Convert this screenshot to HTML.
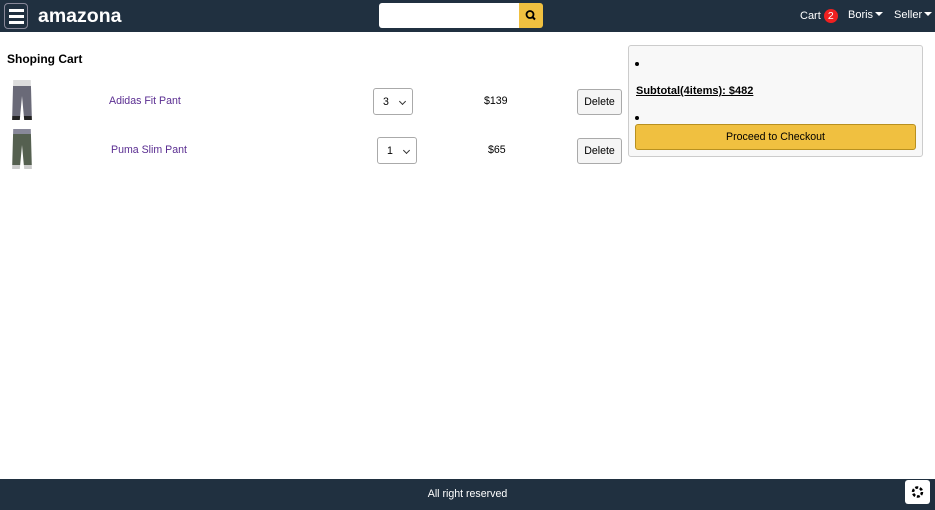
<!DOCTYPE html>
<html><head><style>
*{box-sizing:border-box}
body{margin:0;width:935px;height:510px;position:relative;font-family:"Liberation Sans",Arial,sans-serif;font-size:10.6px;background:#fff;overflow:hidden}
.hdr{position:absolute;left:0;top:0;width:935px;height:32px;background:#203040}
.burger{position:absolute;left:4px;top:3px;width:24px;height:26px;border:1px solid #889;border-radius:4px}
.burger i{position:absolute;left:4px;width:15px;height:2.5px;background:#fff}
.logo{position:absolute;left:38px;top:5px;color:#fff;font-weight:bold;font-size:19.5px}
.search{position:absolute;left:379px;top:3px;width:140px;height:25px;background:#fff;border-radius:3px 0 0 3px}
.sbtn{position:absolute;left:519px;top:3px;width:24px;height:25px;background:#f0c040;border-radius:0 3px 3px 0}
.nav{position:absolute;top:9px;color:#fff;font-size:11px}
.badge{display:inline-block;background:#f02020;border-radius:8px;width:14px;height:14px;text-align:center;font-size:10.5px;line-height:14px}
.tri{display:inline-block;border-left:4px solid transparent;border-right:4px solid transparent;border-top:4px solid #fff;margin-left:2px;vertical-align:2px}
.t{position:absolute}
.sel{position:absolute;width:40px;height:27px;border:1px solid #aaa;border-radius:3px;padding:7px 0 0 9px}
.sel:after{content:"";position:absolute;right:7px;top:10px;width:4px;height:4px;border-right:1.5px solid #333;border-bottom:1.5px solid #333;transform:rotate(45deg)}
.del{position:absolute;width:45px;height:26px;border:1px solid #aaa;border-radius:3px;background:#f5f5f5;text-align:center;line-height:24px}
.pant{position:absolute;width:22px;height:40px}
.box{position:absolute;left:628px;top:45px;width:295px;height:112px;border:1px solid #ccc;border-radius:3px;background:#f8f8f8}
.foot{position:absolute;left:0;top:479px;width:935px;height:31px;background:#203040;color:#fff;text-align:center;line-height:31px}
</style></head><body>
<div class="hdr">
<div class="burger"><i style="top:5px"></i><i style="top:11px"></i><i style="top:17px"></i></div>
<div class="logo">amazona</div>
<div class="search"></div>
<div class="sbtn"><svg width="24" height="25"><circle cx="11" cy="11.5" r="3.5" fill="none" stroke="#000" stroke-width="1.8"/><line x1="13.5" y1="14" x2="16" y2="16.5" stroke="#000" stroke-width="2"/></svg></div>
<div class="nav" style="left:800px">Cart <span class="badge">2</span></div>
<div class="nav" style="left:848px">Boris<span class="tri"></span></div>
<div class="nav" style="left:894px">Seller<span class="tri"></span></div>
</div>
<div class="t" style="left:7px;top:52px;font-weight:bold;font-size:12px">Shoping Cart</div>
<div class="pant" style="left:11px;top:80px;background:linear-gradient(#ddd 0 15%,#6a6a78 15% 90%,#222 90%);clip-path:polygon(10% 0,90% 0,95% 100%,60% 100%,50% 40%,40% 100%,5% 100%)"></div>
<div class="pant" style="left:11px;top:129px;background:linear-gradient(#889 0 12%,#556050 12% 90%,#ccc 90%);clip-path:polygon(10% 0,90% 0,95% 100%,60% 100%,50% 40%,40% 100%,5% 100%)"></div>
<div class="t" style="left:109px;top:95px;color:#5a2d91">Adidas Fit Pant</div>
<div class="t" style="left:111px;top:144px;color:#5a2d91">Puma Slim Pant</div>
<div class="sel" style="left:373px;top:88px">3</div>
<div class="sel" style="left:377px;top:137px">1</div>
<div class="t" style="left:484px;top:95px">$139</div>
<div class="t" style="left:488px;top:144px">$65</div>
<div class="del" style="left:577px;top:89px">Delete</div>
<div class="del" style="left:577px;top:138px">Delete</div>
<div class="box">
<div class="t" style="left:6px;top:16px;width:4px;height:4px;border-radius:50%;background:#000"></div>
<div class="t" style="left:7px;top:39px;font-weight:bold;text-decoration:underline;font-size:11px">Subtotal(4items): $482</div>
<div class="t" style="left:6px;top:70px;width:4px;height:4px;border-radius:50%;background:#000"></div>
<div class="t" style="left:6px;top:78px;width:281px;height:26px;background:#f0c040;border:1px solid #b89020;border-radius:3px;text-align:center;line-height:24px">Proceed to Checkout</div>
</div>
<div class="foot">All right reserved</div>
<div class="t" style="left:905px;top:480px;width:25px;height:24px;background:#fff;border-radius:3px"><svg width="25" height="24"><circle cx="12.5" cy="12" r="4.5" fill="none" stroke="#000" stroke-width="2.5" stroke-dasharray="3 1.7"/></svg></div>
</body></html>
